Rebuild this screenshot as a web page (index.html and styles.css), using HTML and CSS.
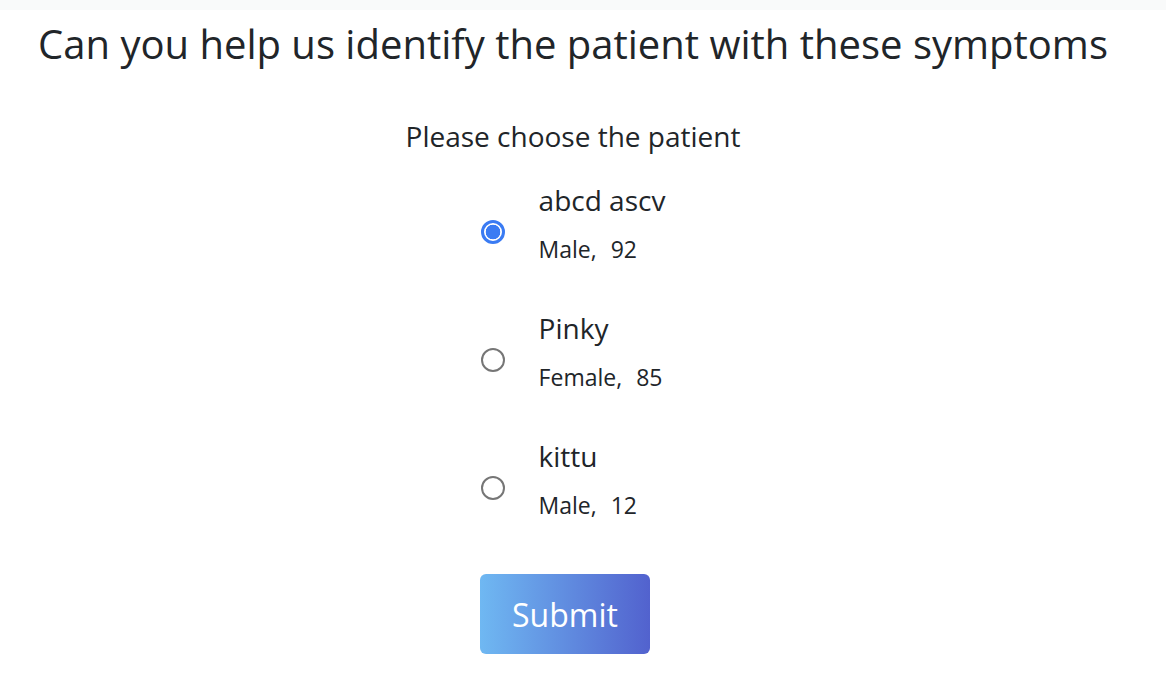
FILE: index.html
```html
<!DOCTYPE html>
<html lang="en">
<head>
<meta charset="utf-8">
<title>Identify patient</title>
<link rel="stylesheet" href="styles.css">
</head>
<body>
<div class="topband"></div>
<main class="page">
  <h1 class="title">Can you help us identify the patient with these symptoms</h1>
  <form class="form">
    <p class="prompt">Please choose the patient</p>
    <div class="options">
      <label class="option">
        <span class="radio checked"></span>
        <span class="info">
          <span class="name">abcd ascv</span>
          <span class="detail"><span>Male,</span> <span>92</span></span>
        </span>
      </label>
      <label class="option">
        <span class="radio"></span>
        <span class="info">
          <span class="name">Pinky</span>
          <span class="detail"><span>Female,</span> <span>85</span></span>
        </span>
      </label>
      <label class="option">
        <span class="radio"></span>
        <span class="info">
          <span class="name">kittu</span>
          <span class="detail"><span>Male,</span> <span>12</span></span>
        </span>
      </label>
    </div>
    <button type="button" class="submit">Submit</button>
  </form>
</main>
</body>
</html>
```
FILE: styles.css
```css
html, body {
  margin: 0;
  padding: 0;
  background: #ffffff;
}
body {
  font-family: "Open Sans", "Noto Sans", sans-serif;
  color: #212529;
}
.topband {
  height: 10px;
  background: #f9fafa;
}
.page {
  width: 1146px;
  display: flex;
  flex-direction: column;
  align-items: center;
}
.title {
  margin: 6px 0 0;
  font-size: 40px;
  font-weight: 400;
  line-height: 56px;
  color: #212529;
}
.form {
  display: flex;
  flex-direction: column;
  align-items: center;
  margin-top: 45px;
}
.prompt {
  margin: 0;
  font-size: 28px;
  line-height: 38px;
}
.options {
  display: flex;
  flex-direction: column;
  gap: 43px;
  margin-top: 25px;
}
.option {
  display: flex;
  align-items: flex-start;
  gap: 34px;
}
.radio {
  width: 20px;
  height: 20px;
  margin-top: 40px;
  border: 2px solid #767676;
  border-radius: 50%;
  box-sizing: content-box;
  flex: none;
}
.radio.checked {
  border: 3px solid #3a7bf3;
  width: 18px;
  height: 18px;
  background: radial-gradient(circle, #3a7bf3 0 7px, #ffffff 7.6px);
}
.info {
  display: flex;
  flex-direction: column;
}
.name {
  font-size: 28px;
  line-height: 40px;
}
.detail {
  font-size: 23px;
  line-height: 32px;
  margin-top: 13px;
}
.detail span:first-child {
  margin-right: 8px;
}
.submit {
  margin-top: 53px;
  margin-right: 16px;
  width: 170px;
  height: 80px;
  border: 0;
  border-radius: 6px;
  background: linear-gradient(90deg, #6fb8f2 0%, #5262ce 100%);
  color: #ffffff;
  font-family: "Open Sans", "Noto Sans", sans-serif;
  font-size: 32px;
  padding: 0;
}
```
